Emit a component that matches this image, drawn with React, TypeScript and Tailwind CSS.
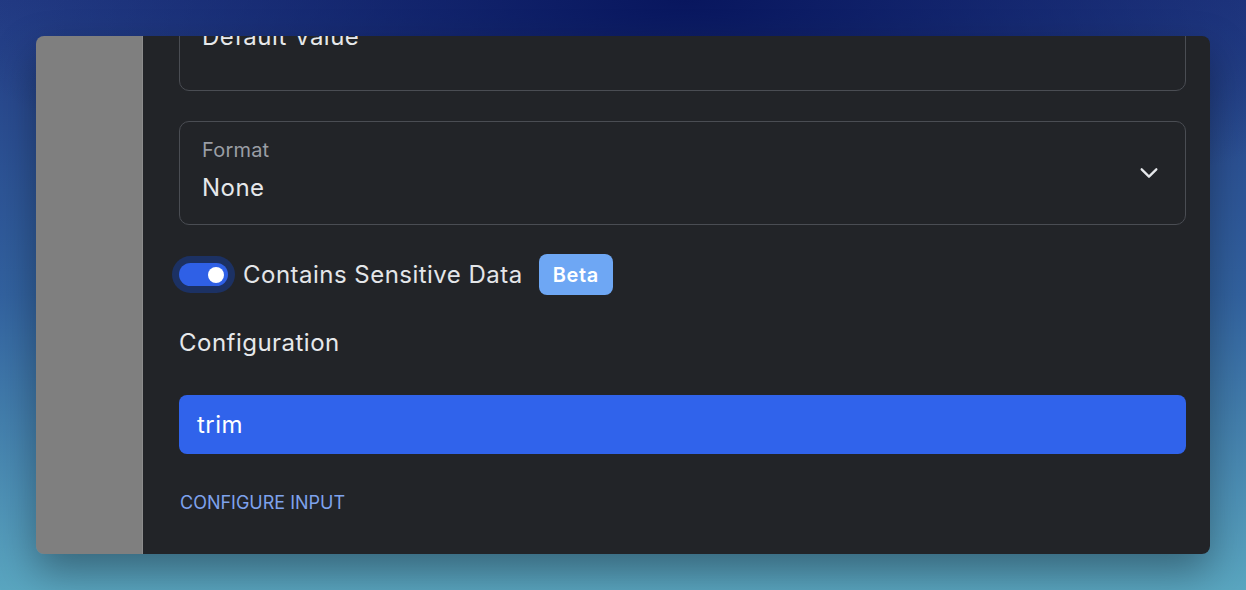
import React from "react"

export default function App() {
  return (
    <div
      className="flex h-[590px] w-[1246px] items-start overflow-hidden bg-[radial-gradient(ellipse_60%_40%_at_55%_0%,#08165e_0%,rgba(8,22,94,0)_100%),linear-gradient(to_bottom,#243d86_0%,#32629f_50%,#5aa6c0_100%)] p-[36px]"
      style={{ fontFamily: "Inter, 'Noto Sans', sans-serif" }}
    >
      <div className="flex h-[518px] w-[1174px] overflow-hidden rounded-lg shadow-[0_18px_40px_rgba(0,0,0,0.35)]">
        {/* grey sidebar */}
        <div className="w-[107px] shrink-0 border-r border-[#8c8c8c] bg-[#7f7f7f]" />

        {/* form panel, scrolled down a bit */}
        <div className="flex-1 overflow-hidden bg-[#222428]">
          <div className="-mt-[49px] flex flex-col pl-[36px] pr-[24px]">
            <div className="flex h-[104px] items-center rounded-[10px] border border-[#4a4d53] pb-[4px] pl-[22px]">
              <span className="text-[24px] leading-[32px] tracking-[0.02em] text-[#e6e8eb]">Default Value</span>
            </div>

            <div className="mt-[30px] flex h-[104px] items-start justify-between rounded-[10px] border border-[#4a4d53] pl-[22px] pr-[25px]">
              <div className="flex flex-col pt-[14px]">
                <span className="text-[20px] leading-[28px] tracking-[0.01em] text-[#9a9ea5]">Format</span>
                <span className="mt-[8px] text-[24px] leading-[32px] tracking-[0.02em] text-[#e6e8eb]">None</span>
              </div>
              <svg className="mt-[40px]" width="22" height="22" viewBox="0 0 24 24" fill="none" stroke="#e6e8eb" strokeWidth="2.5" strokeLinecap="round" strokeLinejoin="round">
                <path d="M4 8l8 8 8-8" />
              </svg>
            </div>

            <div className="mt-[29px] flex h-[41px] items-center">
              <div className="-ml-[7px] flex h-[37px] w-[63px] items-center justify-center rounded-full bg-[#1c3163]">
                <div className="flex h-[23px] w-[49px] items-center justify-end rounded-full bg-[#2f60e6] pr-[4px]">
                  <div className="h-[16px] w-[16px] rounded-full bg-white" />
                </div>
              </div>
              <span className="ml-[8px] text-[24px] leading-[32px] tracking-[0.02em] text-[#e4e6e9]">Contains Sensitive Data</span>
              <span className="ml-[16px] flex h-[41px] items-center rounded-[8px] bg-[#6ea7f4] px-[14px] text-[20px] font-semibold tracking-[0.03em] text-white">
                Beta
              </span>
            </div>

            <div className="mt-[32px] text-[24px] leading-[32px] tracking-[0.02em] text-[#e6e8eb]">Configuration</div>

            <div className="mt-[36px] flex h-[59px] items-center rounded-[8px] bg-[#3063eb] pl-[18px] text-[24px] tracking-[0.02em] text-white">
              trim
            </div>

            <div className="mt-[37px] pl-px text-[18px] leading-[24px] text-[#7ea2ec]">CONFIGURE INPUT</div>
          </div>
        </div>
      </div>
    </div>
  )
}
